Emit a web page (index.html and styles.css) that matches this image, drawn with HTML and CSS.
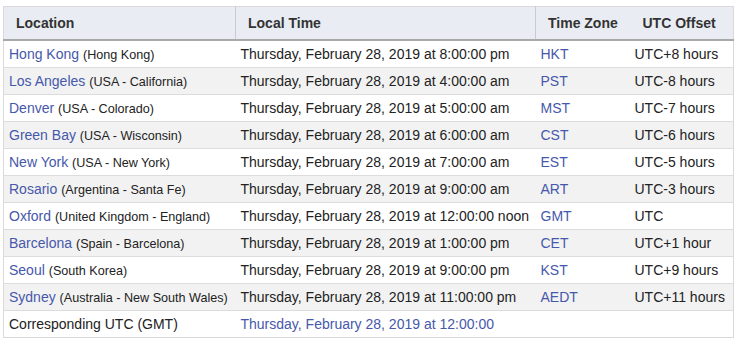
FILE: index.html
```html
<!DOCTYPE html>
<html>
<head>
<meta charset="utf-8">
<link rel="stylesheet" href="styles.css">
</head>
<body>
<div class="wrap">
<table class="tz">
<colgroup><col class="c1"><col class="c2"><col class="c3"><col class="c4"></colgroup>
<thead>
<tr><th class="h1">Location</th><th class="h2">Local Time</th><th class="h3">Time Zone</th><th class="h4">UTC Offset</th></tr>
</thead>
<tbody>
<tr><td><a class="lk">Hong Kong</a> <span class="sm">(Hong Kong)</span></td><td>Thursday, February 28, 2019 at 8:00:00 pm</td><td><a class="lk">HKT</a></td><td>UTC+8 hours</td></tr>
<tr><td><a class="lk">Los Angeles</a> <span class="sm">(USA - California)</span></td><td>Thursday, February 28, 2019 at 4:00:00 am</td><td><a class="lk">PST</a></td><td>UTC-8 hours</td></tr>
<tr><td><a class="lk">Denver</a> <span class="sm">(USA - Colorado)</span></td><td>Thursday, February 28, 2019 at 5:00:00 am</td><td><a class="lk">MST</a></td><td>UTC-7 hours</td></tr>
<tr><td><a class="lk">Green Bay</a> <span class="sm">(USA - Wisconsin)</span></td><td>Thursday, February 28, 2019 at 6:00:00 am</td><td><a class="lk">CST</a></td><td>UTC-6 hours</td></tr>
<tr><td><a class="lk">New York</a> <span class="sm">(USA - New York)</span></td><td>Thursday, February 28, 2019 at 7:00:00 am</td><td><a class="lk">EST</a></td><td>UTC-5 hours</td></tr>
<tr><td><a class="lk">Rosario</a> <span class="sm">(Argentina - Santa Fe)</span></td><td>Thursday, February 28, 2019 at 9:00:00 am</td><td><a class="lk">ART</a></td><td>UTC-3 hours</td></tr>
<tr><td><a class="lk">Oxford</a> <span class="sm">(United Kingdom - England)</span></td><td>Thursday, February 28, 2019 at 12:00:00 noon</td><td><a class="lk">GMT</a></td><td>UTC</td></tr>
<tr><td><a class="lk">Barcelona</a> <span class="sm">(Spain - Barcelona)</span></td><td>Thursday, February 28, 2019 at 1:00:00 pm</td><td><a class="lk">CET</a></td><td>UTC+1 hour</td></tr>
<tr><td><a class="lk">Seoul</a> <span class="sm">(South Korea)</span></td><td>Thursday, February 28, 2019 at 9:00:00 pm</td><td><a class="lk">KST</a></td><td>UTC+9 hours</td></tr>
<tr><td><a class="lk">Sydney</a> <span class="sm">(Australia - New South Wales)</span></td><td>Thursday, February 28, 2019 at 11:00:00 pm</td><td><a class="lk">AEDT</a></td><td>UTC+11 hours</td></tr>
<tr><td>Corresponding UTC (GMT)</td><td><a class="lk">Thursday, February 28, 2019 at 12:00:00</a></td><td></td><td></td></tr>
</tbody>
</table>
</div>
</body>
</html>
```
FILE: styles.css
```css
html, body {
  margin: 0;
  padding: 0;
  background: #fff;
}
.wrap {
  padding: 6px 3px 0 3px;
}
.tz {
  border-collapse: collapse;
  table-layout: fixed;
  width: 730px;
  font-family: "Liberation Sans", Arial, sans-serif;
  font-size: 14px;
  color: #222;
  border: 1px solid #d9d9d9;
}
.c1 { width: 232px; }
.c2 { width: 300px; }
.c3 { width: 94px; }
.c4 { width: 104px; }
.tz th {
  background: #e9edf3;
  color: #333;
  font-weight: bold;
  text-align: left;
  height: 32px;
  padding: 0;
  border-bottom: 2px solid #a9a9a9;
  border-top: 1px solid #d9d9d9;
  white-space: nowrap;
}
.tz th.h1 { padding-left: 12px; border-right: 1px solid #c8ccd2; }
.tz th.h2 { padding-left: 12px; border-right: 1px solid #c8ccd2; }
.tz th.h3 { padding-left: 12px; }
.tz th.h4 { padding-left: 13px; }
.tz td {
  height: 26px;
  padding: 0 0 0 5px;
  border-top: 1px solid #dcdcdc;
  white-space: nowrap;
  vertical-align: middle;
}
.tz tbody tr:nth-child(even) td {
  background: #f2f2f2;
}
.lk {
  color: #4658ab;
  text-decoration: none;
}
.sm {
  font-size: 12.6px;
}
```
